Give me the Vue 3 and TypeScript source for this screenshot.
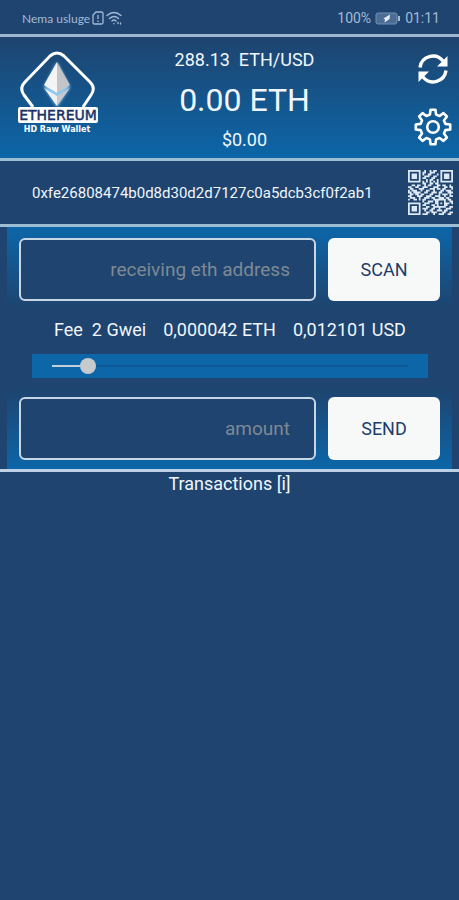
<script setup lang="ts">
import { computed, ref } from 'vue'

const wallet = '0xfe26808474b0d8d30d2d7127c0a5dcb3cf0f2ab1'
const rate = 288.13
const gwei = ref(2)
const receiver = ref('')
const amount = ref('')

const decimal = (value: number) => value.toFixed(6).replace('.', ',')
const feeEth = computed(() => decimal(gwei.value * 0.000021))
const feeUsd = computed(() => decimal(Math.floor(gwei.value * 0.000021 * rate * 1e6) / 1e6))
const fill = computed(() => ({ '--fill': `${(gwei.value - 1) * 10}%` }))

const qrRows = [
  '1111111001001011001111111',
  '1000001011001110001000001',
  '1011101010011000101011101',
  '1011101001110011001011101',
  '1011101011000110001011101',
  '1000001000101100101000001',
  '1111111010101010101111111',
  '0000000011001101100000000',
  '0011011001011000110110010',
  '1100110011100011100011011',
  '0110001110001110110110001',
  '1011100100110010001101110',
  '1101111001100111011000111',
  '0110110110001100010111010',
  '1100011100111001110010011',
  '0111001001110110011101100',
  '1001101011000011111110110',
  '0000000010011101100010011',
  '1111111001110001101011101',
  '1000001011000110100011000',
  '1011101000110011111110011',
  '1011101011100110010001110',
  '1011101001001100111011000',
  '1000001000110111000110011',
  '1111111011100010011100110',
]
const qrPath = qrRows
  .map((row, y) => [...row].map((bit, x) => (bit === '1' ? `M${x} ${y}h1v1h-1z` : '')).join(''))
  .join('')

const gearPath = (() => {
  const points: string[] = []
  const add = (radius: number, degrees: number) => {
    const a = (degrees * Math.PI) / 180
    points.push(`${(20 + radius * Math.cos(a)).toFixed(2)} ${(20 + radius * Math.sin(a)).toFixed(2)}`)
  }
  for (let i = 0; i < 8; i++) {
    const base = i * 45
    add(12.8, base - 14)
    add(17.4, base - 8)
    add(17.4, base + 8)
    add(12.8, base + 14)
  }
  return `M${points.join('L')}Z`
})()
</script>

<template>
  <main class="app">
    <div class="status">
      <div class="group">
        <span class="carrier">Nema usluge</span>
        <svg width="12" height="14" viewBox="0 0 12 14" fill="none" stroke="currentColor" stroke-width="1.3">
          <path d="M4 1h5.500q1.500 0 1.500 1.500v9q0 1.500-1.500 1.500h-7q-1.500 0-1.500-1.500V4z" />
          <path d="M6 4v4M6 9.500v1.500" />
        </svg>
        <svg width="17" height="15" viewBox="0 0 17 15" fill="none" stroke="currentColor" stroke-width="1.4" stroke-linecap="round">
          <path d="M1 4.500q7-6 14 0M3.500 7.500q4.500-4 9 0M6 10q2-1.800 4 0" />
          <path d="M8 12.500v.2M12 11.500v1M14.500 12v1" />
        </svg>
      </div>
      <div class="group clock">
        <span>100%</span>
        <svg width="26" height="13" viewBox="0 0 26 13">
          <rect x="1" y="1" width="21" height="11" rx="2" fill="#4d6d94" stroke="#7390b3" />
          <path d="M23 4h2v5h-2z" fill="#a4bbd7" />
          <path d="M15 2.500L8.500 6.500l1.500 1-.5 3 5-3.500z" fill="#e4edf8" />
        </svg>
        <span>01:11</span>
      </div>
    </div>

    <header class="header">
      <svg class="logo" viewBox="0 0 84 86" role="img" aria-label="Ethereum HD Raw Wallet">
        <defs>
          <filter id="halo" x="-40%" y="-40%" width="180%" height="180%">
            <feGaussianBlur stdDeviation="1.600" />
          </filter>
        </defs>
        <path d="M17 58L8 46Q3 39 9 33L34 7Q41 1 48 7L74 33Q80 39 75 46L67 58" fill="none" stroke="#fff" stroke-width="3" />
        <path d="M41 13L54 38 41 58 28 38z" fill="#8dc8f0" filter="url(#halo)" />
        <path d="M41 13L28 36l13 8z" fill="#f4f4f5" />
        <path d="M41 13l13 23-13 8z" fill="#c3c4c8" />
        <path d="M28 39l13 8v10z" fill="#f0f0f2" />
        <path d="M54 39l-13 8v10z" fill="#c8c9cd" />
        <rect x="2" y="58" width="80" height="16" rx="2" fill="#fff" />
        <text x="42" y="71" text-anchor="middle" class="logo-name">ETHEREUM</text>
        <text x="41" y="83" text-anchor="middle" class="logo-sub">HD Raw Wallet</text>
      </svg>
      <div class="balance">
        <div class="rate">288.13&nbsp; ETH/USD</div>
        <div class="eth">0.00 ETH</div>
        <div class="usd">$0.00</div>
      </div>
      <div class="actions">
        <button type="button" class="icon" aria-label="Refresh">
          <svg width="32" height="32" viewBox="0 0 32 32" fill="none" stroke="#fff" stroke-width="3.4">
            <path d="M3 14.500A13 13 0 0 1 26 8M29 17.500A13 13 0 0 1 6 24" />
            <path d="M30.500 3v10.500H20zM1.500 29V18.500H12z" fill="#fff" stroke="none" />
          </svg>
        </button>
        <button type="button" class="icon" aria-label="Settings">
          <svg width="40" height="40" viewBox="0 0 40 40" fill="none" stroke="#fff" stroke-width="2.600" stroke-linejoin="round">
            <path :d="gearPath" />
            <circle cx="20" cy="20" r="5.800" />
          </svg>
        </button>
      </div>
    </header>

    <section class="address">
      <span class="hash">{{ wallet }}</span>
      <button type="button" class="icon" aria-label="Show QR code">
        <svg width="45" height="45" viewBox="0 0 25 25"><path :d="qrPath" fill="#dfe8f5" /></svg>
      </button>
    </section>

    <form class="form" @submit.prevent>
      <div class="row top">
        <input v-model="receiver" type="text" placeholder="receiving eth address" aria-label="Receiving eth address" />
        <button type="button" class="button">SCAN</button>
      </div>
      <div class="fee">
        <label class="fee-text" for="fee">
          <span>Fee&nbsp; {{ gwei }} Gwei</span>
          <span>{{ feeEth }} ETH</span>
          <span>{{ feeUsd }} USD</span>
        </label>
        <div class="slider">
          <input id="fee" v-model.number="gwei" type="range" min="1" max="11" :style="fill" />
        </div>
      </div>
      <div class="row bottom">
        <input v-model="amount" type="text" placeholder="amount" aria-label="Amount" />
        <button type="submit" class="button">SEND</button>
      </div>
    </form>

    <h2 class="transactions">Transactions [i]</h2>
  </main>
</template>

<style>
body {
  background: #1e446f;
}
</style>

<style scoped>
.app {
  min-height: 100vh;
  background: #1e446f;
  color: #f1f6fd;
  font-family: Roboto, "Liberation Sans", sans-serif;
  font-size: 18px;
}
.app * {
  box-sizing: border-box;
}
svg {
  display: block;
  flex: none;
}
button {
  font-family: inherit;
  cursor: pointer;
}
.status {
  display: flex;
  justify-content: space-between;
  align-items: center;
  height: 34px;
  padding: 2px 19px 0 22px;
  color: #a4bbd7;
}
.group {
  display: flex;
  align-items: center;
  gap: 2px;
}
.carrier {
  font-family: Lato, Roboto, sans-serif;
  font-size: 12px;
}
.clock {
  gap: 4px;
  font-size: 14px;
}
.header {
  display: grid;
  grid-template-columns: 84px 1fr 66px;
  height: 127px;
  padding: 0 4px 0 16px;
  border-top: 3px solid #9db5d0;
  border-bottom: 3px solid #9cbed3;
  background: linear-gradient(#1e446f, #0c66a8);
}
.logo {
  width: 84px;
  height: 86px;
  margin-top: 12px;
}
.logo-name {
  fill: #1b3266;
  stroke: #1b3266;
  stroke-width: 0.5px;
  font: 14px "DejaVu Sans", sans-serif;
}
.logo-sub {
  fill: #fff;
  font: bold 8px "DejaVu Sans", sans-serif;
}
.balance {
  display: flex;
  flex-direction: column;
  align-items: center;
  padding-top: 11px;
}
.rate,
.usd {
  line-height: 24px;
}
.eth {
  padding: 8px 0;
  font-size: 32px;
  line-height: 40px;
}
.actions {
  display: flex;
  flex-direction: column;
  align-items: flex-end;
  gap: 22px;
  padding-top: 16px;
}
.icon {
  display: grid;
  place-items: center;
  width: 45px;
  padding: 0;
  border: 0;
  background: none;
}
.address {
  display: flex;
  align-items: center;
  justify-content: space-between;
  height: 66px;
  padding: 0 6px 0 32px;
  border-bottom: 3px solid #9cbed3;
}
.hash {
  font-size: 15px;
}
.form {
  border-bottom: 3px solid #bdd1e6;
}
.row {
  display: grid;
  grid-template-columns: 1fr 112px;
  gap: 12px;
  height: 81px;
  margin: 0 7px;
  padding: 11px 12px 7px;
}
.top {
  background: linear-gradient(#0c66a8, #1e446f);
}
.bottom {
  padding: 9px 12px;
  background: linear-gradient(#1e446f, #0c66a8);
}
.row input,
.button {
  width: 100%;
  height: 63px;
  border-radius: 6px;
}
.row input {
  padding: 0 24px;
  border: 2px solid #c8d7e6;
  outline: 0;
  background: #1e446f;
  color: #f1f6fd;
  font-family: inherit;
  font-size: 19px;
  text-align: right;
}
.row input::placeholder {
  color: #7f8994;
  opacity: 1;
}
.button {
  border: 0;
  background: #f7f8f8;
  color: #1e3c6c;
  font-size: 18px;
}
.fee {
  height: 80px;
  padding: 10px 31px 0 32px;
}
.fee-text {
  display: flex;
  justify-content: center;
  gap: 17px;
  height: 36px;
  line-height: 24px;
  white-space: nowrap;
}
.slider {
  display: flex;
  align-items: center;
  height: 24px;
  padding: 0 12px;
  background: #0c66a8;
}
.slider input {
  width: 100%;
  height: 16px;
  margin: 0;
  appearance: none;
  background: linear-gradient(90deg, #c3ced6 var(--fill), #0d5a97 var(--fill)) center / calc(100% - 16px) 2px no-repeat;
}
.slider input::-webkit-slider-thumb {
  width: 16px;
  height: 16px;
  appearance: none;
  border-radius: 50%;
  background: #c5cacd;
}
.transactions {
  margin: 0;
  font-size: 18px;
  font-weight: 400;
  line-height: 24px;
  text-align: center;
}
</style>
